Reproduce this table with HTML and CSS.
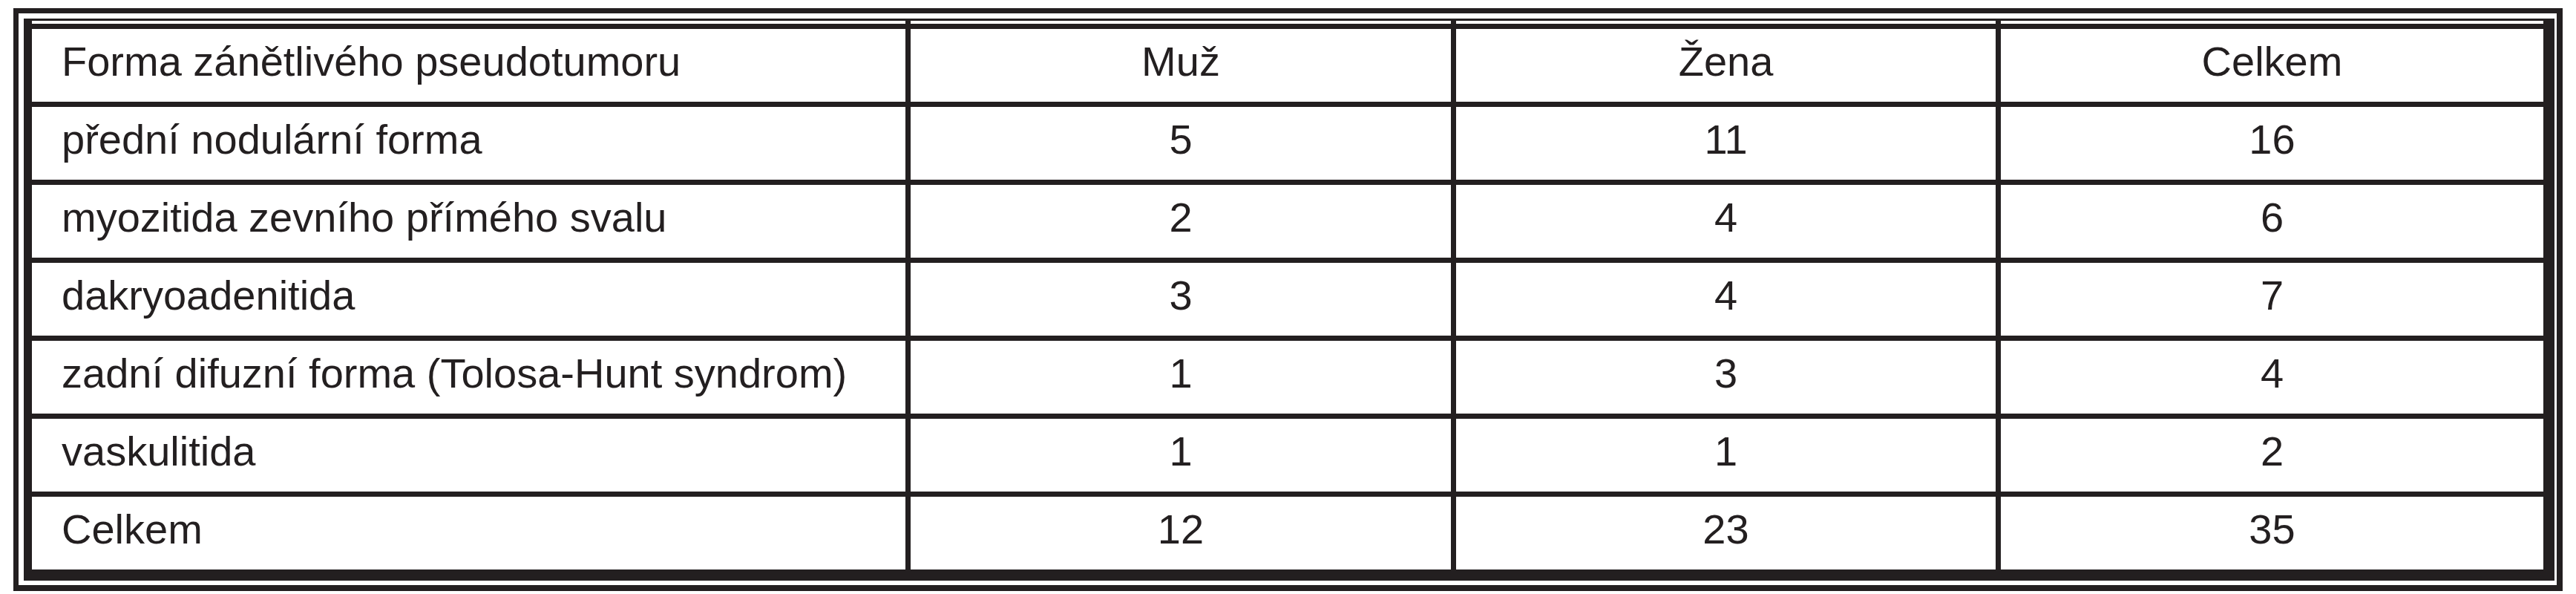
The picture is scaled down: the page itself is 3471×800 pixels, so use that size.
FILE: index.html
```html
<!DOCTYPE html>
<html lang="cs">
<head>
<meta charset="utf-8">
<title>Formy zánětlivého pseudotumoru</title>
<link rel="stylesheet" href="styles.css">
</head>
<body>
<div class="frame">
  <div class="table">
    <div class="grid">
      <div class="cell head first">Forma zánětlivého pseudotumoru</div>
      <div class="cell head">Muž</div>
      <div class="cell head">Žena</div>
      <div class="cell head">Celkem</div>

      <div class="cell first">přední nodulární forma</div>
      <div class="cell">5</div>
      <div class="cell">11</div>
      <div class="cell">16</div>

      <div class="cell first">myozitida zevního přímého svalu</div>
      <div class="cell">2</div>
      <div class="cell">4</div>
      <div class="cell">6</div>

      <div class="cell first">dakryoadenitida</div>
      <div class="cell">3</div>
      <div class="cell">4</div>
      <div class="cell">7</div>

      <div class="cell first">zadní difuzní forma (Tolosa-Hunt syndrom)</div>
      <div class="cell">1</div>
      <div class="cell">3</div>
      <div class="cell">4</div>

      <div class="cell first">vaskulitida</div>
      <div class="cell">1</div>
      <div class="cell">1</div>
      <div class="cell">2</div>

      <div class="cell first">Celkem</div>
      <div class="cell">12</div>
      <div class="cell">23</div>
      <div class="cell">35</div>
    </div>
  </div>
</div>
</body>
</html>
```

FILE: styles.css
```css
html, body {
  margin: 0;
  padding: 0;
  background: #ffffff;
}

body {
  font-family: "Liberation Sans", Arial, sans-serif;
  color: #231f20;
}

.frame {
  margin: 11px 18px 4px;
  border-style: solid;
  border-color: #231f20;
  border-width: 7px 8px 8px 7px;
  padding: 7px 3px 6px 7px;
}

.table {
  border-style: solid;
  border-color: #231f20;
  border-width: 3px 15px 15px 11px;
}

.grid {
  display: grid;
  grid-template-columns: 1177px 728px 727px 731px;
  grid-template-rows: 109px repeat(6, 98px);
  column-gap: 7px;
  row-gap: 7px;
  background: #231f20;
}

.cell {
  background: #ffffff;
  font-size: 56px;
  line-height: normal;
  padding-top: 11px;
  text-align: center;
  white-space: nowrap;
  box-sizing: border-box;
}

.first {
  text-align: left;
  padding-left: 40px;
}

.head {
  padding-top: 22px;
  background: linear-gradient(to bottom, #ffffff 0 4px, #231f20 4px 11px, #ffffff 11px);
}
```
